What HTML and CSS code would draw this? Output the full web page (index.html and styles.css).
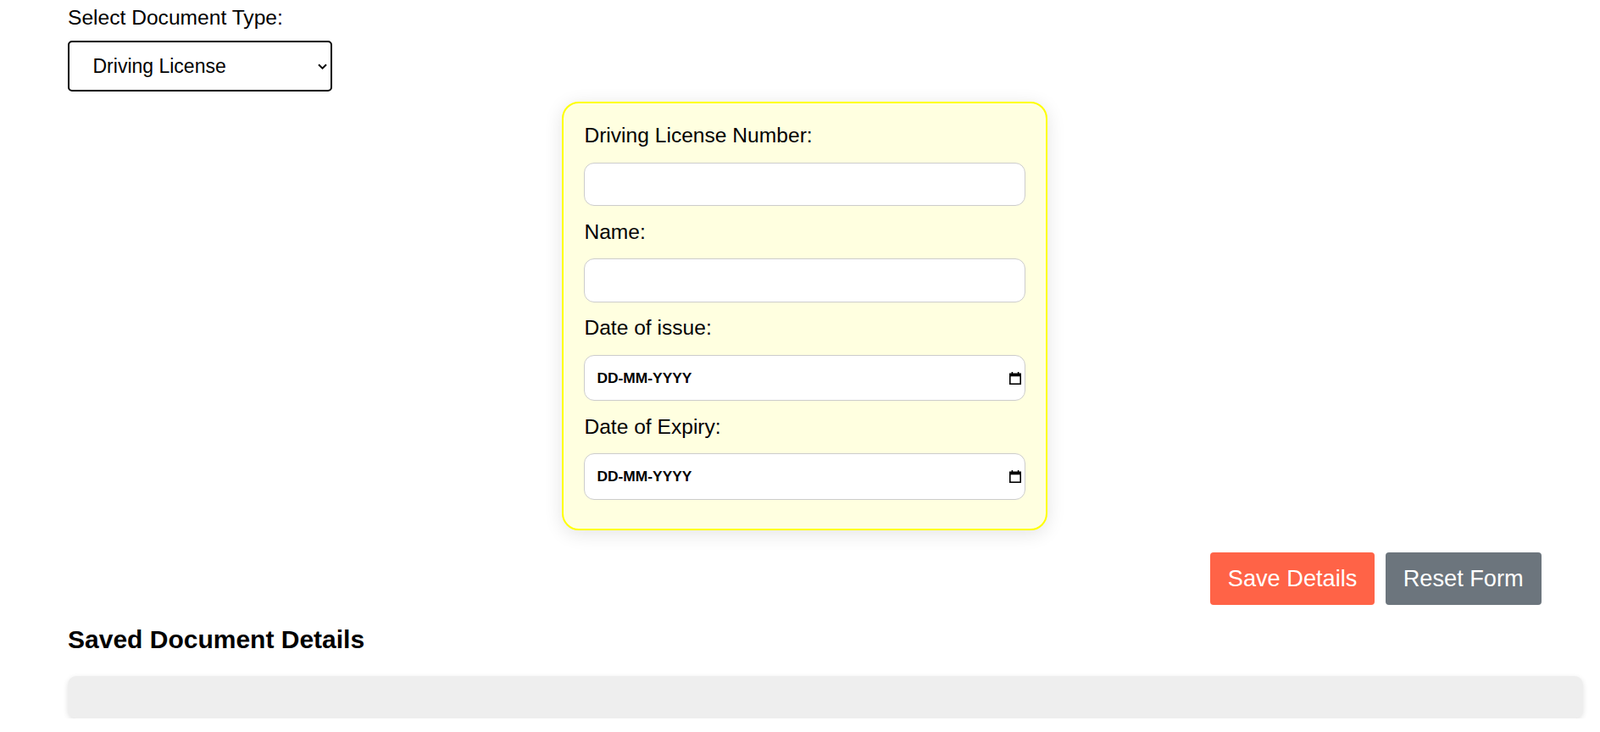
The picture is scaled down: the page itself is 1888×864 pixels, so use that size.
FILE: index.html
```html
<!DOCTYPE html>
<html lang="en">
<head>
<meta charset="utf-8">
<title>Document Details</title>
<link rel="stylesheet" href="styles.css">
</head>
<body>
<div class="page">
  <label class="type-label" for="docType">Select Document Type:</label>
  <div class="select-wrap">
    <select id="docType" class="type-select">
      <option>Driving License</option>
      <option>Passport</option>
      <option>Aadhaar Card</option>
      <option>PAN Card</option>
    </select>
    <svg class="chevron" width="11" height="7" viewBox="0 0 11 7" aria-hidden="true">
      <path d="M1 1.2 L5.5 5.6 L10 1.2" fill="none" stroke="#000" stroke-width="2"/>
    </svg>
  </div>

  <form class="card">
    <div class="field">
      <label class="field-label" for="dlNumber">Driving License Number:</label>
      <input id="dlNumber" class="text-input" type="text">
    </div>
    <div class="field">
      <label class="field-label" for="dlName">Name:</label>
      <input id="dlName" class="text-input" type="text">
    </div>
    <div class="field">
      <label class="field-label" for="dlIssue">Date of issue:</label>
      <div class="date-input">
        <input id="dlIssue" class="date-text" type="text" placeholder="DD-MM-YYYY">
        <svg class="cal-icon" width="14" height="15" viewBox="0 0 14 15" aria-hidden="true">
          <rect x="2.6" y="0" width="1.6" height="2.6" fill="#000"/>
          <rect x="9.8" y="0" width="1.6" height="2.6" fill="#000"/>
          <rect x="0.8" y="2.3" width="12.4" height="11.9" fill="none" stroke="#000" stroke-width="1.6"/>
          <rect x="0.8" y="2.3" width="12.4" height="3" fill="#000"/>
        </svg>
      </div>
    </div>
    <div class="field">
      <label class="field-label" for="dlExpiry">Date of Expiry:</label>
      <div class="date-input">
        <input id="dlExpiry" class="date-text" type="text" placeholder="DD-MM-YYYY">
        <svg class="cal-icon" width="14" height="15" viewBox="0 0 14 15" aria-hidden="true">
          <rect x="2.6" y="0" width="1.6" height="2.6" fill="#000"/>
          <rect x="9.8" y="0" width="1.6" height="2.6" fill="#000"/>
          <rect x="0.8" y="2.3" width="12.4" height="11.9" fill="none" stroke="#000" stroke-width="1.6"/>
          <rect x="0.8" y="2.3" width="12.4" height="3" fill="#000"/>
        </svg>
      </div>
    </div>
  </form>

  <div class="actions">
    <button type="button" class="btn btn-save">Save Details</button>
    <button type="button" class="btn btn-reset">Reset Form</button>
  </div>

  <h2 class="saved-title">Saved Document Details</h2>
  <div class="saved-box"></div>
</div>
</body>
</html>
```

FILE: styles.css
```css
html, body {
  margin: 0;
  padding: 0;
  background: #ffffff;
}

body {
  font-family: "Liberation Sans", Arial, sans-serif;
  color: #000;
  overflow: hidden;
}

.page {
  padding: 6.6px 20px 0 80px;
}

.type-label {
  display: block;
  font-size: 24.6px;
  line-height: normal;
  margin-bottom: 13.5px;
}

.select-wrap {
  position: relative;
  width: 312px;
  height: 60px;
}

.type-select {
  appearance: none;
  -webkit-appearance: none;
  box-sizing: border-box;
  width: 312px;
  height: 60px;
  margin: 0;
  padding: 0 30px 0 27.5px;
  border: 2px solid #000;
  border-radius: 5px;
  background: #fff;
  color: #000;
  font-family: "Liberation Sans", Arial, sans-serif;
  font-size: 23px;
}

.chevron {
  position: absolute;
  right: 6px;
  top: 26.5px;
  pointer-events: none;
}

.card {
  box-sizing: border-box;
  width: 573px;
  margin: 12px 0 0 583.4px;
  padding: 24px 24px 18px;
  background: #ffffe0;
  border: 2px solid #ffff00;
  border-radius: 20px;
  box-shadow: 0 4px 22px rgba(0, 0, 0, 0.11);
}

.field-label {
  display: block;
  font-size: 24.6px;
  line-height: normal;
  margin-bottom: 17.8px;
}

.text-input {
  display: block;
  box-sizing: border-box;
  width: 100%;
  height: 51.6px;
  margin: 0 0 16.2px;
  padding: 0 14px;
  border: 1px solid #cccccc;
  border-radius: 12px;
  background: #fff;
  font-family: "Liberation Sans", Arial, sans-serif;
  font-size: 18px;
  outline: none;
}

.date-input {
  display: flex;
  align-items: center;
  box-sizing: border-box;
  width: 100%;
  height: 54.3px;
  margin: 0 0 16.2px;
  padding: 0 4px 0 14px;
  border: 1px solid #cccccc;
  border-radius: 12px;
  background: #fff;
}

.date-text {
  flex: 1;
  min-width: 0;
  border: none;
  outline: none;
  padding: 0;
  margin: 0;
  background: transparent;
  font-family: "Liberation Sans", Arial, sans-serif;
  font-size: 17.4px;
  font-weight: bold;
  color: #000;
}

.date-text::placeholder {
  color: #000;
  opacity: 1;
}

.cal-icon {
  flex: none;
  display: block;
}

.actions {
  display: flex;
  justify-content: flex-end;
  gap: 12.3px;
  margin-top: 26.4px;
  padding-right: 49.3px;
}

.btn {
  border: none;
  border-radius: 4px;
  padding: 15.1px 21px;
  color: #fff;
  font-family: "Liberation Sans", Arial, sans-serif;
  font-size: 27.2px;
  line-height: normal;
  cursor: pointer;
}

.btn-save {
  background: #ff6347;
}

.btn-reset {
  background: #6c757d;
}

.saved-title {
  margin: 23.7px 0 0;
  font-size: 30px;
  font-weight: bold;
  line-height: normal;
}

.saved-box {
  height: 49.4px;
  margin-top: 26.3px;
  background: #eeeeee;
  border-radius: 10px;
  box-shadow: 0 2px 6px rgba(0, 0, 0, 0.12);
}
```
